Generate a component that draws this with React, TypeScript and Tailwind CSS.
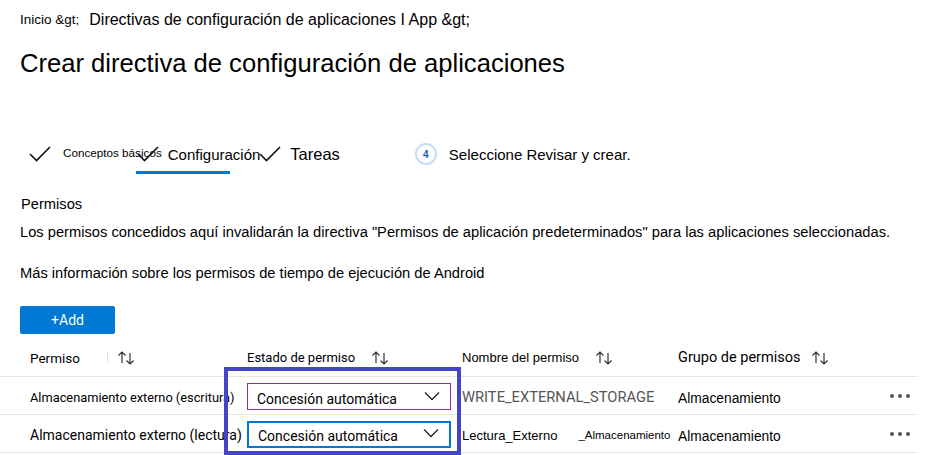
import React from "react";

const arial = { fontFamily: '"Liberation Sans", Arial, sans-serif' };
const segoe = { fontFamily: 'Roboto, "Liberation Sans", sans-serif' };

function Check() {
  return (
    <svg width="22" height="16" viewBox="0 0 22 16" fill="none">
      <path d="M1 8 L7.5 14.5 L21 1" stroke="#111" strokeWidth="1.6" />
    </svg>
  );
}

function Sort() {
  return (
    <svg width="20" height="16" viewBox="0 0 20 16" fill="none" stroke="#333" strokeWidth="1.2">
      <path d="M6 13 V2 M2.5 5.5 L6 2 L9.5 5.5" />
      <path d="M14 3 V14 M10.5 10.5 L14 14 L17.5 10.5" />
    </svg>
  );
}

function Chevron() {
  return (
    <svg width="16" height="10" viewBox="0 0 16 10" fill="none" stroke="#222" strokeWidth="1.3">
      <path d="M1 1.5 L8 8.5 L15 1.5" />
    </svg>
  );
}

function Dots() {
  return (
    <div className="flex gap-[4px]">
      <span className="w-[4px] h-[4px] rounded-full bg-[#555]" />
      <span className="w-[4px] h-[4px] rounded-full bg-[#555]" />
      <span className="w-[4px] h-[4px] rounded-full bg-[#555]" />
    </div>
  );
}

function Dropdown({ border }: { border: string }) {
  return (
    <div
      className={`w-[204px] h-[27px] flex items-end justify-between pl-[9px] pr-[10px] bg-white ${border}`}
    >
      <span className="text-[14px] leading-[20px] text-black whitespace-nowrap" style={segoe}>
        Concesión automática
      </span>
      <span className="mb-[8px]">
        <Chevron />
      </span>
    </div>
  );
}

export default function App() {
  return (
    <div className="w-[935px] h-[455px] bg-white overflow-hidden relative text-black" style={arial}>
      {/* breadcrumb */}
      <div className="h-[40px] flex items-center pl-[20px] whitespace-nowrap">
        <span className="text-[13.5px]">Inicio &amp;gt;</span>
        <span className="text-[16px] ml-[10px]">Directivas de configuración de aplicaciones I App &amp;gt;</span>
      </div>
      {/* title */}
      <div className="h-[46px] flex items-center pl-[20px] text-[25.6px] whitespace-nowrap">
        Crear directiva de configuración de aplicaciones
      </div>
      {/* steps */}
      <div className="mt-[51px] h-[34px] flex items-center whitespace-nowrap">
        <span className="ml-[29px]"><Check /></span>
        <span className="ml-[12px] text-[11.7px] leading-none mb-[3px]">Conceptos básicos</span>
        <span className="ml-[-25px]"><Check /></span>
        <span className="ml-[9px] text-[15px] leading-none">Configuración</span>
        <span className="ml-[-1px]"><Check /></span>
        <span className="ml-[9px] text-[16.5px] leading-none">Tareas</span>
        <span className="ml-[75px] w-[22px] h-[22px] rounded-full border-2 border-[#c5dcf5] flex items-center justify-center text-[10px] font-bold text-[#1b5aa6]">
          4
        </span>
        <span className="ml-[12px] text-[15px] leading-none">Seleccione Revisar y crear.</span>
      </div>
      <div className="ml-[136px] w-[94px] h-[3px] bg-[#0078d4]" />
      {/* texts */}
      <div className="mt-[19px] h-[22px] flex items-center pl-[21px] text-[14.7px]">Permisos</div>
      <div className="mt-[6px] h-[22px] flex items-center pl-[20px] text-[14.7px] whitespace-nowrap">
        Los permisos concedidos aquí invalidarán la directiva "Permisos de aplicación predeterminados" para las aplicaciones seleccionadas.
      </div>
      <div className="mt-[19px] h-[22px] flex items-center pl-[20px] text-[14.7px] whitespace-nowrap">
        Más información sobre los permisos de tiempo de ejecución de Android
      </div>
      {/* add button */}
      <div className="mt-[22px] ml-[20px] w-[95px] h-[28px] rounded-[2px] bg-[#0078d4] text-white flex items-center justify-center text-[14px]" style={segoe}>
        +Add
      </div>
      {/* table */}
      <div className="mt-[6px] w-[918px] whitespace-nowrap">
        <div className="h-[37px] flex items-center border-b border-[#e6e6e6]">
          <div className="w-[247px] pl-[30px] flex items-center">
            <span className="text-[13.5px]" style={segoe}>Permiso</span>
            <span className="ml-[27px] w-[1px] h-[10px] bg-[#e0e0e0]" />
            <span className="ml-[8px]"><Sort /></span>
          </div>
          <div className="w-[215px] flex items-center">
            <span className="text-[13px]" style={segoe}>Estado de permiso</span>
            <span className="ml-[15px]"><Sort /></span>
          </div>
          <div className="w-[216px] flex items-center">
            <span className="text-[13px]">Nombre del permiso</span>
            <span className="ml-[15px]"><Sort /></span>
          </div>
          <div className="flex-1 flex items-center">
            <span className="text-[14.5px]" style={segoe}>Grupo de permisos</span>
            <span className="ml-[10px]"><Sort /></span>
          </div>
        </div>
        <div className="h-[38px] flex items-center border-b border-[#e6e6e6] pt-[4px]">
          <div className="w-[247px] pl-[30px] text-[12.8px]" style={segoe}>
            Almacenamiento externo (escritura)
          </div>
          <div className="w-[215px] mt-[-3px]">
            <Dropdown border="border-[1.5px] border-[#8b30a8]" />
          </div>
          <div className="w-[216px] text-[14.7px] text-[#555]" style={segoe}>
            WRITE_EXTERNAL_STORAGE
          </div>
          <div className="flex-1 text-[13.8px] pt-[4px]">Almacenamiento</div>
          <div className="w-[28px] mt-[-4px]"><Dots /></div>
        </div>
        <div className="h-[38px] flex items-center border-b border-[#e6e6e6] pt-[4px]">
          <div className="w-[247px] pl-[30px] text-[14px]" style={segoe}>
            Almacenamiento externo (lectura)
          </div>
          <div className="w-[215px] mt-[-3px]">
            <Dropdown border="border-2 border-[#0078d4]" />
          </div>
          <div className="w-[216px] flex items-center">
            <span className="text-[13px]">Lectura_Externo</span>
            <span className="ml-[21px] text-[11.5px]">_Almacenamiento</span>
          </div>
          <div className="flex-1 text-[13.8px] pt-[4px]">Almacenamiento</div>
          <div className="w-[28px] mt-[-4px]"><Dots /></div>
        </div>
      </div>
      {/* highlight annotation */}
      <div className="absolute left-[224px] top-[367px] w-[237px] h-[88px] border-[4px] border-[#4444c6]" />
    </div>
  );
}
